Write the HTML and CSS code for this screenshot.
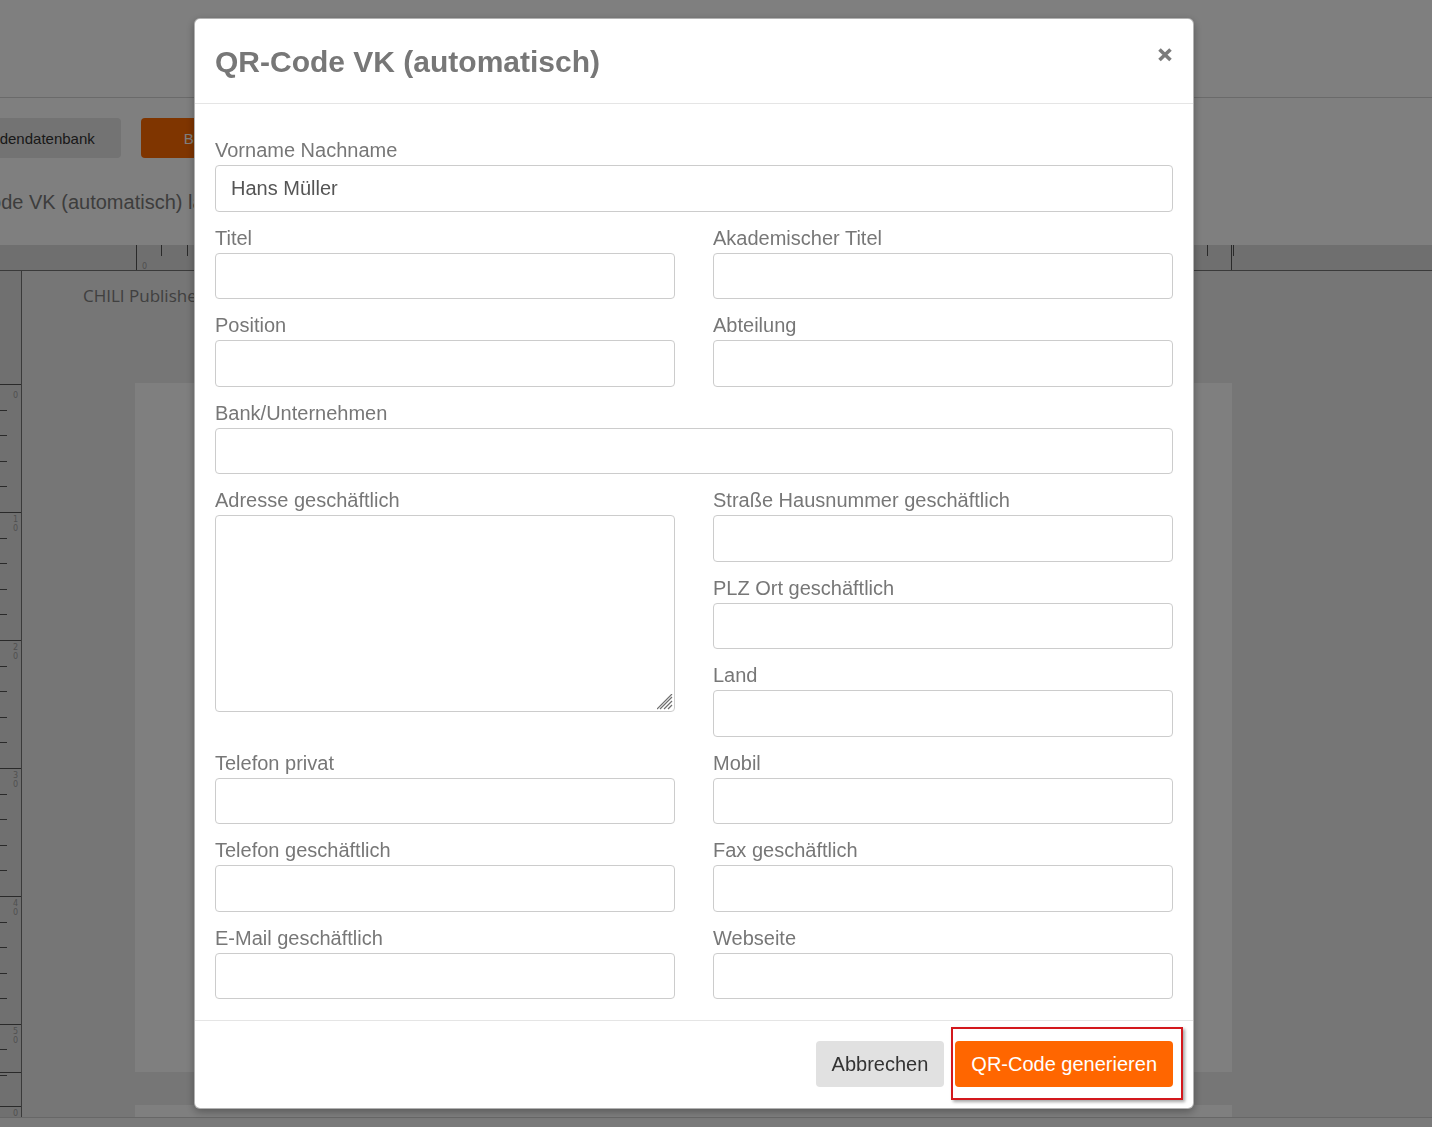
FILE: index.html
```html
<!DOCTYPE html>
<html lang="de">
<head>
    <meta charset="UTF-8">
    <meta name="viewport" content="width=device-width, initial-scale=1.0">
    <title>QR-Code VK (automatisch)</title>
    <link rel="stylesheet" href="styles.css">
</head>
<body>

    <!-- page behind the dialog -->
    <div class="app">
        <header class="topbar"></header>

        <div class="toolbar">
            <div class="toolbar-buttons">
                <button class="btn-plain">Kundendatenbank</button>
                <button class="btn-accent">Bildvorschau</button>
            </div>
            <div class="doc-title">QR-Code VK (automatisch) laden</div>
        </div>

        <div class="workspace">
            <div class="ruler-top">
                <svg width="1432" height="25" viewBox="0 0 1432 25">
                    <g stroke="#555" stroke-width="1">
                        <line x1="136.5" y1="0" x2="136.5" y2="25"/>
                        <line x1="161.5" y1="0" x2="161.5" y2="11"/>
                        <line x1="187.5" y1="0" x2="187.5" y2="11"/>
                        <line x1="213.5" y1="0" x2="213.5" y2="11"/>
                        <line x1="1207.5" y1="0" x2="1207.5" y2="11"/>
                        <line x1="1231.5" y1="0" x2="1231.5" y2="25"/>
                        <line x1="1233.5" y1="0" x2="1233.5" y2="11"/>
                    </g>
                    <text x="142" y="24" class="ruler-num">0</text>
                </svg>
            </div>

            <div class="work-area">
                <div class="ruler-left">
                    <svg width="21" height="846" viewBox="0 0 21 846">
                        <g stroke="#555" stroke-width="1">
                            <line x1="0" y1="113.5" x2="21" y2="113.5"/>
                            <line x1="0" y1="139.5" x2="7" y2="139.5"/>
                            <line x1="0" y1="164.5" x2="7" y2="164.5"/>
                            <line x1="0" y1="190.5" x2="7" y2="190.5"/>
                            <line x1="0" y1="215.5" x2="7" y2="215.5"/>
                            <line x1="0" y1="241.5" x2="21" y2="241.5"/>
                            <line x1="0" y1="267.5" x2="7" y2="267.5"/>
                            <line x1="0" y1="292.5" x2="7" y2="292.5"/>
                            <line x1="0" y1="318.5" x2="7" y2="318.5"/>
                            <line x1="0" y1="343.5" x2="7" y2="343.5"/>
                            <line x1="0" y1="369.5" x2="21" y2="369.5"/>
                            <line x1="0" y1="395.5" x2="7" y2="395.5"/>
                            <line x1="0" y1="420.5" x2="7" y2="420.5"/>
                            <line x1="0" y1="446.5" x2="7" y2="446.5"/>
                            <line x1="0" y1="471.5" x2="7" y2="471.5"/>
                            <line x1="0" y1="497.5" x2="21" y2="497.5"/>
                            <line x1="0" y1="523.5" x2="7" y2="523.5"/>
                            <line x1="0" y1="548.5" x2="7" y2="548.5"/>
                            <line x1="0" y1="574.5" x2="7" y2="574.5"/>
                            <line x1="0" y1="599.5" x2="7" y2="599.5"/>
                            <line x1="0" y1="625.5" x2="21" y2="625.5"/>
                            <line x1="0" y1="651.5" x2="7" y2="651.5"/>
                            <line x1="0" y1="676.5" x2="7" y2="676.5"/>
                            <line x1="0" y1="702.5" x2="7" y2="702.5"/>
                            <line x1="0" y1="727.5" x2="7" y2="727.5"/>
                            <line x1="0" y1="753.5" x2="21" y2="753.5"/>
                            <line x1="0" y1="778.5" x2="7" y2="778.5"/>
                            <line x1="0" y1="801.5" x2="21" y2="801.5"/>
                            <line x1="0" y1="804.5" x2="7" y2="804.5"/>
                            <line x1="0" y1="835.5" x2="21" y2="835.5"/>
                        </g>
                        <g class="ruler-num">
                            <text x="13" y="127">0</text>
                            <text x="13" y="251">1</text>
                            <text x="13" y="260">0</text>
                            <text x="13" y="379">2</text>
                            <text x="13" y="388">0</text>
                            <text x="13" y="507">3</text>
                            <text x="13" y="516">0</text>
                            <text x="13" y="635">4</text>
                            <text x="13" y="644">0</text>
                            <text x="13" y="763">5</text>
                            <text x="13" y="772">0</text>
                            <text x="13" y="845">0</text>
                        </g>
                    </svg>
                </div>
                <div class="canvas">
                    <div class="canvas-label">CHILI Publisher</div>
                    <div class="sheet"></div>
                    <div class="sheet"></div>
                </div>
            </div>

            <div class="statusbar"></div>
        </div>
    </div>

    <!-- dialog -->
    <div class="backdrop">
        <div class="modal">
            <div class="modal-header">
                <h4 class="modal-title">QR-Code VK (automatisch)</h4>
                <button type="button" class="close" aria-label="Schließen">
                    <svg width="14" height="15" viewBox="0 0 14 15">
                        <path d="M1.5 2.5 L12.5 13 M12.5 2.5 L1.5 13" stroke="#7b7b7b" stroke-width="3.6" fill="none"/>
                    </svg>
                </button>
            </div>

            <form class="modal-body">
                <div class="field full">
                    <label for="name">Vorname Nachname</label>
                    <input id="name" type="text" value="Hans Müller">
                </div>

                <div class="field">
                    <label for="titel">Titel</label>
                    <input id="titel" type="text">
                </div>
                <div class="field">
                    <label for="akad">Akademischer Titel</label>
                    <input id="akad" type="text">
                </div>

                <div class="field">
                    <label for="position">Position</label>
                    <input id="position" type="text">
                </div>
                <div class="field">
                    <label for="abteilung">Abteilung</label>
                    <input id="abteilung" type="text">
                </div>

                <div class="field full">
                    <label for="bank">Bank/Unternehmen</label>
                    <input id="bank" type="text">
                </div>

                <div class="field">
                    <label for="adresse">Adresse geschäftlich</label>
                    <div class="textarea-wrap">
                        <textarea id="adresse"></textarea>
                        <svg class="grip" width="16" height="16" viewBox="0 0 16 16">
                            <path d="M15 3 L3 15 M15 7 L7 15 M15 11 L11 15 M15 0 L0 15" stroke="#6e6e6e" stroke-width="1.2" fill="none"/>
                        </svg>
                    </div>
                </div>
                <div class="stack">
                    <div class="field">
                        <label for="strasse">Straße Hausnummer geschäftlich</label>
                        <input id="strasse" type="text">
                    </div>
                    <div class="field">
                        <label for="plz">PLZ Ort geschäftlich</label>
                        <input id="plz" type="text">
                    </div>
                    <div class="field">
                        <label for="land">Land</label>
                        <input id="land" type="text">
                    </div>
                </div>

                <div class="field">
                    <label for="tel">Telefon privat</label>
                    <input id="tel" type="text">
                </div>
                <div class="field">
                    <label for="mobil">Mobil</label>
                    <input id="mobil" type="text">
                </div>

                <div class="field">
                    <label for="telg">Telefon geschäftlich</label>
                    <input id="telg" type="text">
                </div>
                <div class="field">
                    <label for="fax">Fax geschäftlich</label>
                    <input id="fax" type="text">
                </div>

                <div class="field">
                    <label for="mail">E-Mail geschäftlich</label>
                    <input id="mail" type="text">
                </div>
                <div class="field">
                    <label for="web">Webseite</label>
                    <input id="web" type="text">
                </div>
            </form>

            <div class="modal-footer">
                <button type="button" class="btn btn-default">Abbrechen</button>
                <span class="highlight">
                    <button type="button" class="btn btn-primary">QR-Code generieren</button>
                </span>
            </div>
        </div>
    </div>

</body>
</html>
```

FILE: styles.css
```css
body {
    margin: 0;
    height: 1127px;
    overflow: hidden;
    font-family: "Liberation Sans", Arial, sans-serif;
    background-color: #fff;
    color: #333;
}

/* background page */
.app {
    height: 1127px;
    overflow: hidden;
}
.topbar {
    height: 97px;
    border-bottom: 1px solid #d4d4d4;
}
.toolbar {
    height: 147px;
    padding-top: 20px;
    box-sizing: border-box;
    margin-left: -61px;
}
.toolbar-buttons {
    display: flex;
    gap: 20px;
}
.btn-plain,
.btn-accent {
    height: 40px;
    border: none;
    border-radius: 4px;
    font-family: inherit;
    font-size: 15px;
}
.btn-plain {
    padding: 0 26px 0 34px;
    background-color: #e6e6e6;
    color: #333;
}
.btn-accent {
    padding: 0 43px;
    background-color: #ff6a00;
    color: #fff;
}
.doc-title {
    margin-top: 32px;
    font-size: 20px;
    line-height: 24px;
    color: #7a7a7a;
    white-space: nowrap;
}

.workspace {
    display: flex;
    flex-direction: column;
    height: 882px;
}
.ruler-top {
    height: 25px;
    background-color: #dedede;
    border-bottom: 1px solid #747474;
}
.ruler-top svg,
.ruler-left svg {
    display: block;
}
.ruler-num {
    font-family: "DejaVu Sans", sans-serif;
    font-size: 8px;
    fill: #a0a0a0;
}
.work-area {
    display: flex;
    height: 846px;
}
.ruler-left {
    width: 21px;
    background-color: #e0e0e0;
    border-right: 1px solid #747474;
}
.canvas {
    flex: 1;
    background-color: #ececec;
    padding: 16px 0 0 61px;
    overflow: hidden;
}
.canvas-label {
    font-family: "Open Sans", sans-serif;
    font-size: 17px;
    line-height: 18px;
    color: #808080;
    margin-bottom: 78px;
}
.sheet {
    width: 1097px;
    height: 689px;
    margin-left: 52px;
    margin-bottom: 33px;
    background-color: #fefefe;
}
.statusbar {
    height: 9px;
    background-color: #f4f4f4;
    border-top: 1px solid #cfcfcf;
}

/* dialog */
.backdrop {
    position: fixed;
    inset: 0;
    background-color: rgba(0, 0, 0, 0.5);
    padding: 18px 0 0 194px;
}
.modal {
    width: 1000px;
    box-sizing: border-box;
    background-color: #fff;
    border: 1px solid rgba(0, 0, 0, 0.3);
    border-radius: 6px;
    box-shadow: 0 3px 9px rgba(0, 0, 0, 0.3);
}
.modal-header {
    display: flex;
    align-items: center;
    justify-content: space-between;
    padding: 21px 21px 19px 20px;
    border-bottom: 1px solid #e5e5e5;
}
.modal-title {
    margin: 0;
    font-size: 30px;
    line-height: 44px;
    font-weight: bold;
    color: #777;
}
.close {
    padding: 0;
    margin-top: -15px;
    border: none;
    background: none;
    cursor: pointer;
}
.close svg {
    display: block;
}

.modal-body {
    display: grid;
    grid-template-columns: 1fr 1fr;
    column-gap: 38px;
    padding: 35px 20px 6px;
    margin: 0;
}
.field {
    margin-bottom: 15px;
}
.field.full {
    grid-column: 1 / -1;
}
.field label {
    display: block;
    font-size: 20px;
    line-height: 22px;
    margin-bottom: 4px;
    color: #777;
}
.field input,
.field textarea {
    display: block;
    width: 100%;
    box-sizing: border-box;
    height: 46.5px;
    padding: 0 15px;
    border: 1px solid #ccc;
    border-radius: 4px;
    font-family: inherit;
    font-size: 20px;
    color: #555;
    background-color: #fff;
}
.textarea-wrap {
    position: relative;
}
.field textarea {
    height: 197px;
    resize: none;
}
.grip {
    position: absolute;
    right: 2px;
    bottom: 2px;
    pointer-events: none;
}

.modal-footer {
    display: flex;
    justify-content: flex-end;
    align-items: center;
    gap: 11px;
    padding: 20px 20px 21px;
    border-top: 1px solid #e5e5e5;
}
.btn {
    height: 46px;
    padding: 0 16px;
    border: none;
    border-radius: 4px;
    font-family: inherit;
    font-size: 20px;
    cursor: pointer;
}
.btn-default {
    background-color: #e1e1e1;
    color: #333;
}
.btn-primary {
    background-color: #ff6600;
    color: #fff;
}
.highlight {
    position: relative;
    display: block;
}
.highlight .btn {
    display: block;
}
.highlight::after {
    content: "";
    position: absolute;
    left: -4px;
    top: -14px;
    right: -10px;
    bottom: -13px;
    border: 2px solid #d3181d;
    box-shadow: 2px 2px 3px rgba(0, 0, 0, 0.35);
    pointer-events: none;
}
```
